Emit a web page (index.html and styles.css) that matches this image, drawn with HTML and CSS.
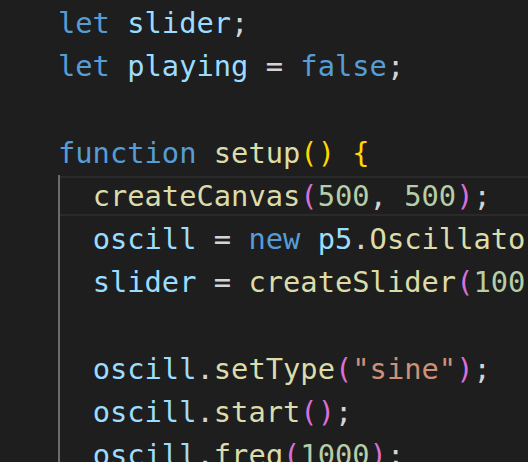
FILE: index.html
```html
<!DOCTYPE html>
<html lang="en">
<head>
<meta charset="utf-8">
<title>sketch.js</title>
<link rel="stylesheet" href="styles.css">
</head>
<body>
<div class="editor">
  <div class="line"><span class="kw">let</span> <span class="var">slider</span><span class="pun">;</span></div>
  <div class="line"><span class="kw">let</span> <span class="var">playing</span> <span class="pun">=</span> <span class="kw">false</span><span class="pun">;</span></div>
  <div class="line"> </div>
  <div class="line"><span class="kw">function</span> <span class="fn">setup</span><span class="b1">()</span> <span class="b1">{</span></div>
  <div class="block">
    <div class="line current">  <span class="fn">createCanvas</span><span class="b2">(</span><span class="num">500</span><span class="pun">,</span> <span class="num">500</span><span class="b2">)</span><span class="pun">;</span></div>
    <div class="line">  <span class="var">oscill</span> <span class="pun">=</span> <span class="kw">new</span> <span class="var">p5</span><span class="pun">.</span><span class="fn">Oscillator</span><span class="b2">()</span><span class="pun">;</span></div>
    <div class="line">  <span class="var">slider</span> <span class="pun">=</span> <span class="fn">createSlider</span><span class="b2">(</span><span class="num">100</span><span class="pun">,</span> <span class="num">5000</span><span class="b2">)</span><span class="pun">;</span></div>
    <div class="line"> </div>
    <div class="line">  <span class="var">oscill</span><span class="pun">.</span><span class="fn">setType</span><span class="b2">(</span><span class="str">"sine"</span><span class="b2">)</span><span class="pun">;</span></div>
    <div class="line">  <span class="var">oscill</span><span class="pun">.</span><span class="fn">start</span><span class="b2">()</span><span class="pun">;</span></div>
    <div class="line">  <span class="var">oscill</span><span class="pun">.</span><span class="fn">freq</span><span class="b2">(</span><span class="num">1000</span><span class="b2">)</span><span class="pun">;</span></div>
  </div>
</div>
</body>
</html>
```

FILE: styles.css
```css
html, body {
  margin: 0;
  padding: 0;
  background: #1e1e1e;
  overflow: hidden;
}

.editor {
  padding: 2px 0 0 58px;
  font-family: "DejaVu Sans Mono", "Liberation Mono", monospace;
  font-size: 28.75px;
  line-height: 43.2px;
  color: #d4d4d4;
}

.line {
  height: 43.2px;
  white-space: pre;
  overflow: hidden;
}

.block {
  background: linear-gradient(#6b6b6b, #6b6b6b) 0 0 / 2px 100% no-repeat;
}

.line.current {
  box-sizing: border-box;
  background:
    linear-gradient(#6b6b6b, #6b6b6b) 0 0 / 2px 100% no-repeat,
    linear-gradient(#2a2a2a, #2a2a2a) 0 1px / 100% 2px no-repeat,
    linear-gradient(#2a2a2a, #2a2a2a) 0 calc(100% - 2px) / 100% 2px no-repeat;
}

.kw { color: #569cd6; }
.var { color: #9cdcfe; }
.fn { color: #dcdcaa; }
.pun { color: #d4d4d4; }
.num { color: #b5cea8; }
.str { color: #ce9178; }
.b1 { color: #ffd700; }
.b2 { color: #da70d6; }
```
